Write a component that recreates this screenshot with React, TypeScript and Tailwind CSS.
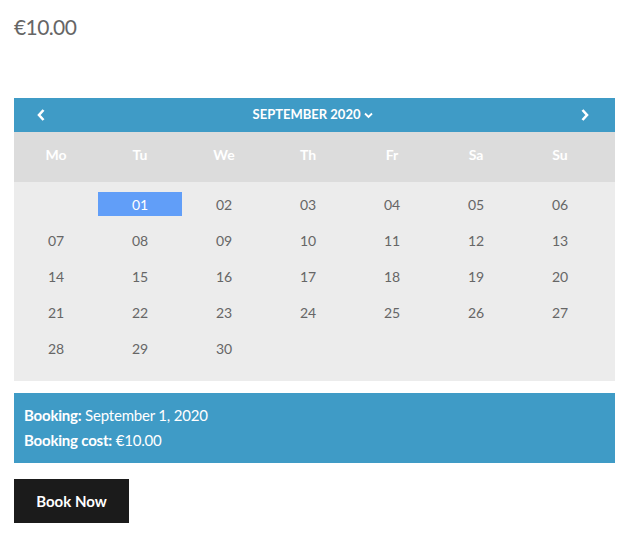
const days: (number | null)[] = [null, ...Array.from({ length: 30 }, (_, i) => i + 1)];
const weekdays = ['Mo', 'Tu', 'We', 'Th', 'Fr', 'Sa', 'Su'];

export default function App() {
  return (
    <div className="bg-white min-h-[540px] px-[14px] pt-[14px] font-['Lato','Open_Sans',sans-serif] text-[#666]">
      <p className="text-[21px] leading-[26px] tracking-[-0.6px] text-[#666]">€10.00</p>

      <div className="mt-[58px]">
        {/* month header */}
        <div className="h-[34px] bg-[#3f9bc6] flex items-center justify-between px-[20px] text-white">
          <svg width="10" height="14" viewBox="0 0 10 14" className="ml-[2px]">
            <path d="M7.5 2 L3 7 L7.5 12" stroke="white" strokeWidth="2.6" fill="none" />
          </svg>
          <div className="flex items-center gap-[4px] text-[13px] font-bold">
            SEPTEMBER 2020
            <svg width="9" height="7" viewBox="0 0 9 7">
              <path d="M1 1.5 L4.5 5 L8 1.5" stroke="white" strokeWidth="1.8" fill="none" />
            </svg>
          </div>
          <svg width="10" height="14" viewBox="0 0 10 14" className="mr-[5px]">
            <path d="M2.5 2 L7 7 L2.5 12" stroke="white" strokeWidth="2.6" fill="none" />
          </svg>
        </div>

        {/* weekdays */}
        <div className="h-[50px] pb-[6px] bg-[#dcdcdc] grid grid-cols-[repeat(7,84px)] items-center">
          {weekdays.map((d) => (
            <span key={d} className="text-center text-white text-[14px] font-bold">{d}</span>
          ))}
        </div>

        {/* days */}
        <div className="bg-[#ececec] pt-[10px] pb-[21px] grid grid-cols-[repeat(7,84px)] gap-y-[12px]">
          {days.map((d, i) => (
            <div
              key={i}
              className={
                d === 1
                  ? 'h-[24px] flex items-center justify-center bg-[#619ef8] text-white text-[14px]'
                  : 'h-[24px] flex items-center justify-center text-[#666] text-[14px]'
              }
            >
              {d ? String(d).padStart(2, '0') : ''}
            </div>
          ))}
        </div>
      </div>

      <div className="mt-[12px] bg-[#3f9bc6] h-[70px] px-[10px] pt-[10px] text-white text-[15px] leading-[25px] tracking-[-0.2px]">
        <p><span className="font-bold">Booking:</span> September 1, 2020</p>
        <p><span className="font-bold">Booking cost:</span> €10.00</p>
      </div>

      <button className="mt-[16px] h-[44px] w-[115px] bg-[#1b1b1b] text-white text-[15px] font-bold">
        Book Now
      </button>
    </div>
  );
}
